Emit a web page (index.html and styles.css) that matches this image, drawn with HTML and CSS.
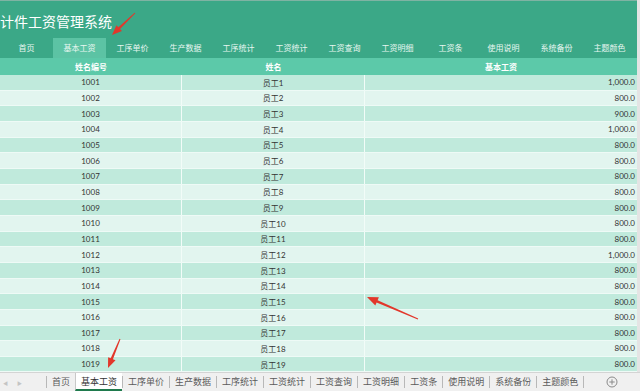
FILE: index.html
```html
<!DOCTYPE html>
<html lang="zh-CN">
<head>
    <meta charset="UTF-8">
    <title>计件工资管理系统</title>
    <link rel="stylesheet" href="styles.css">
</head>
<body>
<div class="app">
    <div class="main">
        <!--标题-->
        <div class="title-bar">
            <h1>计件工资管理系统</h1>
        </div>
        <!--菜单-->
        <div class="menu">
            <span>首页</span>
            <span class="current">基本工资</span>
            <span>工序单价</span>
            <span>生产数据</span>
            <span>工序统计</span>
            <span>工资统计</span>
            <span>工资查询</span>
            <span>工资明细</span>
            <span>工资条</span>
            <span>使用说明</span>
            <span>系统备份</span>
            <span>主题颜色</span>
        </div>
        <!--表格-->
        <div class="sheet">
            <div class="row head"><span>姓名编号</span><span>姓名</span><span>基本工资</span></div>
            <div class="row"><span>1001</span><span>员工1</span><span class="num">1,000.0</span></div>
            <div class="row"><span>1002</span><span>员工2</span><span class="num">800.0</span></div>
            <div class="row"><span>1003</span><span>员工3</span><span class="num">900.0</span></div>
            <div class="row"><span>1004</span><span>员工4</span><span class="num">1,000.0</span></div>
            <div class="row"><span>1005</span><span>员工5</span><span class="num">800.0</span></div>
            <div class="row"><span>1006</span><span>员工6</span><span class="num">800.0</span></div>
            <div class="row"><span>1007</span><span>员工7</span><span class="num">800.0</span></div>
            <div class="row"><span>1008</span><span>员工8</span><span class="num">800.0</span></div>
            <div class="row"><span>1009</span><span>员工9</span><span class="num">800.0</span></div>
            <div class="row"><span>1010</span><span>员工10</span><span class="num">800.0</span></div>
            <div class="row"><span>1011</span><span>员工11</span><span class="num">800.0</span></div>
            <div class="row"><span>1012</span><span>员工12</span><span class="num">1,000.0</span></div>
            <div class="row"><span>1013</span><span>员工13</span><span class="num">800.0</span></div>
            <div class="row"><span>1014</span><span>员工14</span><span class="num">800.0</span></div>
            <div class="row"><span>1015</span><span>员工15</span><span class="num">800.0</span></div>
            <div class="row"><span>1016</span><span>员工16</span><span class="num">800.0</span></div>
            <div class="row"><span>1017</span><span>员工17</span><span class="num">800.0</span></div>
            <div class="row"><span>1018</span><span>员工18</span><span class="num">800.0</span></div>
            <div class="row"><span>1019</span><span>员工19</span><span class="num">800.0</span></div>
        </div>
    </div>
    <!--工作表标签-->
    <div class="tabs">
        <div class="scroll"><i>&#9664;</i><i>&#9654;</i></div>
        <span class="tab">首页</span>
        <span class="tab current">基本工资</span>
        <span class="tab">工序单价</span>
        <span class="tab">生产数据</span>
        <span class="tab">工序统计</span>
        <span class="tab">工资统计</span>
        <span class="tab">工资查询</span>
        <span class="tab">工资明细</span>
        <span class="tab">工资条</span>
        <span class="tab">使用说明</span>
        <span class="tab">系统备份</span>
        <span class="tab last">主题颜色</span>
        <span class="add">
            <svg width="12" height="12" viewBox="0 0 12 12">
                <circle cx="6" cy="6" r="5" fill="none" stroke="#8a8a8a" stroke-width="1"/>
                <path d="M6 3.3v5.4M3.3 6h5.4" stroke="#8a8a8a" stroke-width="1"/>
            </svg>
        </span>
    </div>
    <!--标注箭头-->
    <svg class="marks" width="640" height="391" viewBox="0 0 640 391">
        <polygon points="135.35,13.36 120.03,28.97 121.97,30.99 112,35 116.43,25.21 118.37,27.23 134.65,12.64"/>
        <polygon points="418.2,318.54 377.61,300.17 378.88,297.22 367,297 375.32,305.5 376.59,302.55 417.8,319.46"/>
        <polygon points="120.46,339.19 112.93,359.22 115.52,360.29 108,368 108.12,357.23 110.71,358.3 119.54,338.81"/>
    </svg>
</div>
</body>
</html>
```

FILE: styles.css
```css
* {
    margin: 0;
    padding: 0;
    box-sizing: border-box;
}

body {
    width: 640px;
    height: 391px;
    overflow: hidden;
    font-family: "Noto Sans CJK SC", sans-serif;
    background-color: #fff;
}

.app {
    position: relative;
    width: 640px;
    height: 391px;
    display: flex;
    flex-direction: column;
}

.main {
    height: 372px;
    border-right: 3px solid #e4e4e4;
    display: flex;
    flex-direction: column;
    overflow: hidden;
}

.title-bar {
    height: 38px;
    background-color: #3ba887;
    border-top: 1px solid #7fb3a3;
    display: flex;
    align-items: center;
}

.title-bar h1 {
    font-size: 14px;
    font-weight: normal;
    color: #fff;
    margin-top: 2px;
}

.menu {
    height: 20px;
    background-color: #3ba887;
    display: flex;
}

.menu span {
    width: 53px;
    font-size: 8px;
    line-height: 20px;
    color: #e8f7f1;
    text-align: center;
}

.menu span.current {
    background-color: #5cc3a4;
}

.sheet {
    flex: 1;
    overflow: hidden;
    background-color: #e2f5ef;
}

.row {
    display: grid;
    grid-template-columns: 182px 183px 1fr;
    height: 15.67px;
    border-bottom: 1px solid #eefaf6;
    font-family: Lato, "Noto Sans CJK SC", sans-serif;
    font-size: 8px;
    color: #333;
    background-color: #e2f5ef;
}

.row:nth-child(even) {
    background-color: #c0eadc;
}

.row span {
    display: flex;
    align-items: center;
    justify-content: center;
    border-right: 1px solid #f2fcf8;
}

.row span.num {
    justify-content: flex-end;
    padding-right: 2px;
    border-right: none;
}

.row.head {
    height: 17px;
    background-color: #5cc9a9;
    border-bottom: none;
    color: #fff;
    font-family: "Noto Sans CJK SC", sans-serif;
    font-weight: bold;
}

.row.head span {
    border-right: none;
}

.row.head span.num {
    justify-content: center;
}

.tabs {
    height: 19px;
    background-color: #f0f0f0;
    border-top: 1px solid #d4d4d4;
    display: flex;
    align-items: center;
    font-size: 9px;
    color: #5a5a5a;
}

.scroll {
    width: 46px;
    display: flex;
    gap: 9px;
    padding-left: 3px;
}

.scroll i {
    font-style: normal;
    font-size: 5px;
    color: #c4c4c4;
}

.tab {
    height: 12px;
    line-height: 12px;
    padding: 0 5px;
    border-left: 1px solid #b8b8b8;
    white-space: nowrap;
}

.tab.current {
    height: 18px;
    line-height: 17px;
    background-color: #fff;
    color: #333;
    border-left: 1px solid #c8c8c8;
    border-bottom: 2px solid #1f7a4d;
}

.tab.last {
    border-right: 1px solid #b8b8b8;
}

.add {
    margin-left: 22px;
    display: flex;
}

.marks {
    position: absolute;
    top: 0;
    left: 0;
    pointer-events: none;
}

.marks polygon {
    fill: #e2372b;
}
```
